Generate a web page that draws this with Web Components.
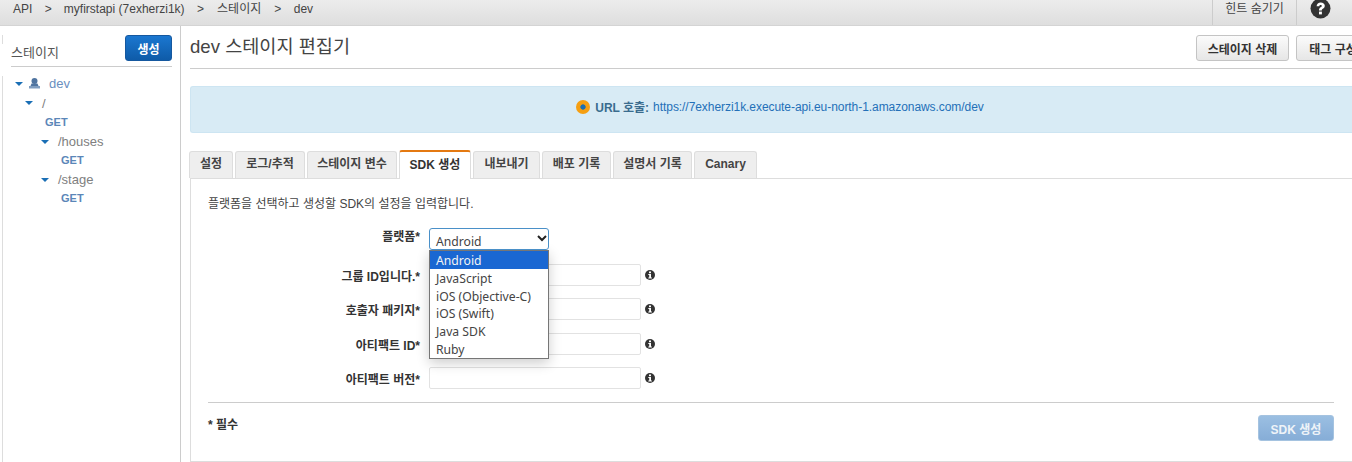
<!DOCTYPE html>
<html lang="ko"><head><meta charset="utf-8"><title>SDK</title>
<style>
html,body{margin:0;padding:0;height:462px;overflow:hidden;background:#fff;font-family:"Liberation Sans","Noto Sans CJK KR",sans-serif;font-size:13px;color:#444}
</style></head><body>
<aws-console></aws-console>
<script>
const KR='"Liberation Sans","Noto Sans CJK KR",sans-serif';
function def(name,css,html,init){
  customElements.define(name,class extends HTMLElement{
    constructor(){super();const s=this.attachShadow({mode:'open'});s.innerHTML='<style>'+css+'</style>'+(typeof html==='function'?html(this):html);}
    connectedCallback(){if(init)init(this);}
  });
}
def('top-bar',`
:host{display:flex;height:26px;box-sizing:border-box;background:linear-gradient(#ececec,#dedede);border-bottom:1px solid #d4d4d4;color:#444;font-size:12px;line-height:17px;white-space:nowrap}
.crumbs{flex:1;display:flex;padding:0 0 0 13px;align-items:flex-start;padding-top:1px}
.crumbs span{display:block}
.sep{margin:0 12px 0 12.500px}
.sep.b{margin-right:13px}
.sep.c{margin:0 12.500px 0 13px}
.hint{width:84px;border-left:1px solid #ccc;display:flex;justify-content:center;padding-top:1px;box-sizing:border-box;align-items:flex-start}
.help{width:56px;border-left:1px solid #ccc;box-sizing:border-box;padding-left:13px}
svg{display:block;width:21px;height:21px;margin-top:-2px}
`,`<div class="crumbs"><span>API</span><span class="sep">&gt;</span><span>myfirstapi (7exherzi1k)</span><span class="sep b">&gt;</span><span>스테이지</span><span class="sep c">&gt;</span><span>dev</span></div>
<div class="hint">힌트 숨기기</div>
<div class="help"><svg viewBox="0 0 21 21"><circle cx="10.500" cy="10.500" r="10" fill="#333"/><path d="M6.600 8.200c.1-2.500 1.800-3.800 4.100-3.800 2.400 0 4.100 1.400 4.100 3.400 0 1.600-1 2.400-1.900 3-.8.500-1.100.8-1.100 1.600H9c0-1.700.6-2.500 1.600-3.100.8-.5 1.200-.8 1.200-1.400 0-.6-.5-1-1.200-1-.8 0-1.200.5-1.300 1.300z" fill="#fff"/><rect x="9" y="13.600" width="2.900" height="2.800" fill="#fff"/></svg></div>`);

def('tree-row',`
:host{display:flex;align-items:center;box-sizing:border-box;height:19.100px;white-space:nowrap;font-size:13px;color:#808080}
:host([plain]){padding-top:1.500px}
.arrow{width:0;height:0;border-left:4px solid transparent;border-right:4px solid transparent;border-top:4px solid #1a6fb5;margin-right:var(--gap,0)}
:host([method]){font-weight:700;font-size:11px;color:#5b86b8}
:host([stage]){color:#6a8fc0}
svg{width:13px;height:11px;margin:0 8px 0 -6px}
`,el=>{
  const arrow=el.hasAttribute('method')?'':'<span class="arrow"></span>';
  const st=el.hasAttribute('stage')?'<svg viewBox="0 0 13 11"><circle cx="6.500" cy="3" r="3" fill="#4f74a0"/><path d="M3.500 5.500h6l1 2.500h-8z" fill="#4f74a0"/><path d="M1 8h11v2.500H1z" fill="#7f9dc0"/></svg>':'';
  return arrow+st+'<slot></slot>';
},el=>{el.style.paddingLeft=(el.getAttribute('indent')||0)+'px';el.style.setProperty('--gap',(el.getAttribute('gap')||8)+'px')});

def('side-bar',`
:host{display:block;width:181px;flex:none;box-sizing:border-box;border-right:1px solid #ccc;height:436px;position:relative}
.stripe1,.stripe2{position:absolute;left:0;width:2px;background:#fff;border-right:1px solid #ddd}
.stripe1{top:9px;height:9px}.stripe2{top:50px;bottom:0}
.head{display:flex;justify-content:space-between;margin-left:11px;margin-right:8px;height:41px;padding-top:9px;box-sizing:border-box;border-bottom:1px solid #ccc;width:161px}
.label{font-size:13px;color:#555;padding-top:7px}
button{width:47px;height:26px;border:1px solid #15589f;border-radius:3px;background:linear-gradient(#1b77d0,#0f5ba8);color:#fff;font:700 12px ${KR};padding:0}
.tree{padding:7px 0 0 15px;display:flex;flex-direction:column}
`,`<div class="stripe1"></div><div class="stripe2"></div>
<div class="head"><span class="label">스테이지</span><button>생성</button></div>
<div class="tree">
<tree-row stage gap="11">dev</tree-row>
<tree-row plain indent="10" gap="9">/</tree-row>
<tree-row method indent="30">GET</tree-row>
<tree-row plain indent="26" gap="9">/houses</tree-row>
<tree-row method indent="46">GET</tree-row>
<tree-row plain indent="26" gap="9">/stage</tree-row>
<tree-row method indent="46">GET</tree-row>
</div>`);

def('tab-item',`
:host{display:block;box-sizing:border-box;height:27px;padding:0;text-align:center;margin-right:2px;background:#eee;border:1px solid #ddd;border-bottom:none;border-radius:3px 3px 0 0;font:700 12px/25px ${KR};color:#444;white-space:nowrap;flex:none}
:host([active]){background:#fff;border-top:2px solid #e47911;height:29px;margin-bottom:-1px;line-height:26px;color:#333;position:relative;z-index:1}
`,'<slot></slot>',el=>{el.style.width=el.getAttribute('w')+'px'});

def('info-icon',`:host{display:block;width:10px;height:10px;flex:none}svg{display:block}`,
`<svg width="10" height="10" viewBox="0 0 10 10"><circle cx="5" cy="5" r="5" fill="#333"/><rect x="4" y="1.500" width="2" height="1.700" fill="#fff"/><path d="M3.300 4h2.700v3.600h.9v1H3.300v-1h.9V5H3.300z" fill="#fff"/></svg>`);

def('form-row',`
:host{display:flex;align-items:center;position:absolute;left:0;height:22px}
.l{width:238px;text-align:right;padding-right:9px;box-sizing:border-box;font:700 12px ${KR};color:#333;white-space:nowrap}
.in{width:212px;height:22px;box-sizing:border-box;border:1px solid #e2e2e2;border-radius:2px;background:#fff}
info-icon{margin-left:4px}
`,el=>`<div class="l">${el.getAttribute('label')}</div><div class="in"></div><info-icon></info-icon>`,
el=>{el.style.top=el.getAttribute('top')+'px'});

def('select-menu',`
:host{display:block;position:absolute;left:238px;top:49px;width:120px;font:12.200px/18px "Noto Sans","Noto Sans CJK KR",sans-serif;color:#444}
.box{height:22px;box-sizing:border-box;border:1px solid #4a90c8;border-radius:3px;background:#fff;padding:4px 0 0 6px;position:relative;line-height:18px}
.box svg{position:absolute;right:1px;top:5px}
.list{box-sizing:border-box;border:1px solid #767676;background:#fff;height:109px;box-shadow:0 4px 12px rgba(0,0,0,.2)}
.list div{height:17.800px;padding-left:6px;line-height:19.500px}
.sel{background:#1a67d2;color:#f4f4f4}
`,`<div class="box">Android<svg width="10" height="8" viewBox="0 0 10 8"><path d="M1 2l4 4 4-4" fill="none" stroke="#222" stroke-width="2"/></svg></div>
<div class="list"><div class="sel">Android</div><div>JavaScript</div><div>iOS (Objective-C)</div><div>iOS (Swift)</div><div>Java SDK</div><div>Ruby</div></div>`);

def('sdk-panel',`
:host{display:block;position:relative;height:284px;box-sizing:border-box;border:1px solid #ddd;border-right:none;background:#fff}
.intro{position:absolute;left:17px;top:17px;font-size:12px;line-height:16px;color:#444;white-space:nowrap}
.rule{position:absolute;left:17px;right:18px;top:223px;border-top:1px solid #ccc}
.req{position:absolute;left:17px;top:238px;font:700 12px/16px ${KR};color:#333}
button{position:absolute;left:1067px;top:236px;width:76px;height:26px;border:1px solid #a5c3e0;border-radius:3px;background:linear-gradient(#9bbfe2,#86add7);color:#eef3f8;font:700 12px ${KR};padding:0}
.plabel{position:absolute;left:0;top:50px;width:238px;height:22px;padding-right:9px;box-sizing:border-box;text-align:right;font:700 12px/16px ${KR};color:#333}
`,`<div class="intro">플랫폼을 선택하고 생성할 SDK의 설정을 입력합니다.</div>
<div class="plabel">플랫폼*</div>
<form-row top="85" label="그룹 ID입니다.*"></form-row>
<form-row top="119" label="호출자 패키지*"></form-row>
<form-row top="154" label="아티팩트 ID*"></form-row>
<form-row top="188" label="아티팩트 버전*"></form-row>
<select-menu></select-menu>
<div class="rule"></div>
<div class="req">* 필수</div>
<button>SDK 생성</button>`);

def('main-area',`
:host{display:block;flex:1;min-width:0;padding:0 0 0 9px;overflow:hidden}
.head{display:flex;height:43px;box-sizing:border-box;border-bottom:1px solid #ccc;justify-content:space-between;white-space:nowrap;overflow:hidden}
h1{margin:0;padding-top:9px;font:400 18.600px/24px ${KR};color:#444}
.btns{display:flex;gap:7px;padding-top:9px;margin-right:-18px}
.btns button{height:26px;border:1px solid #c4c4c4;border-radius:3px;background:linear-gradient(#fbfbfb,#e6e6e6);font:700 12px ${KR};color:#333;padding:0;white-space:nowrap}
.b1{width:93px}.b2{width:74px}
.banner{margin-top:17px;height:47px;box-sizing:border-box;background:#d8ebf5;border:1px solid #cde5f2;border-right:none;border-radius:3px 0 0 3px;display:flex;align-items:center;justify-content:center;font-size:12px;color:#31708f;gap:4px;padding:0 0 6px 17px;white-space:nowrap}
.banner b{font-weight:700;color:#3a6c8e}.banner a{color:#2470b8;text-decoration:none;letter-spacing:-.06px}
.dot{width:14px;height:14px;border-radius:50%;flex:none;background:radial-gradient(#1d6fb0 0 2.300px,#f59f12 3px);margin-right:1px}
.tabs{display:flex;margin:17px 0 0 -1px;height:28px;align-items:flex-end}
`,`<div class="head"><h1>dev 스테이지 편집기</h1><div class="btns"><button class="b1">스테이지 삭제</button><button class="b2">태그 구성</button></div></div>
<div class="banner"><span class="dot"></span><b>URL 호출:</b><a>https://7exherzi1k.execute-api.eu-north-1.amazonaws.com/dev</a></div>
<div class="tabs"><tab-item w="44">설정</tab-item><tab-item w="70">로그/추적</tab-item><tab-item w="90">스테이지 변수</tab-item><tab-item w="72" active>SDK 생성</tab-item><tab-item w="67">내보내기</tab-item><tab-item w="69">배포 기록</tab-item><tab-item w="79">설명서 기록</tab-item><tab-item w="63">Canary</tab-item></div>
<sdk-panel></sdk-panel>`);

def('aws-console',`
:host{display:block;width:1352px;height:462px;overflow:hidden}
.body{display:flex}
`,`<top-bar></top-bar><div class="body"><side-bar></side-bar><main-area></main-area></div>`);
</script>
</body></html>
